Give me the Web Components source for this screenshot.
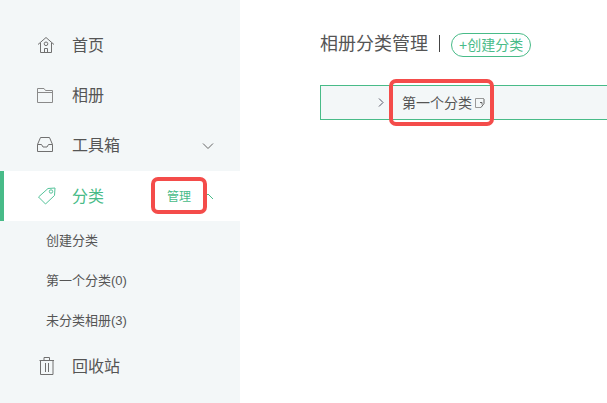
<!DOCTYPE html>
<html lang="zh">
<head>
<meta charset="utf-8">
<title>相册分类管理</title>
<style>
    html, body { margin: 0; height: 100%; overflow: hidden; background: #fff; }
    body { font-family: "Liberation Sans", "Noto Sans CJK SC", sans-serif; color: #555; }
</style>
</head>
<body>
<app-shell>
    <side-bar slot="side">
        <nav-item icon="home" label="首页"></nav-item>
        <nav-item icon="folder" label="相册"></nav-item>
        <nav-item icon="inbox" label="工具箱" arrow="down"></nav-item>
        <nav-item icon="tag" label="分类" arrow="up" active></nav-item>
        <sub-item>创建分类</sub-item>
        <sub-item>第一个分类(0)</sub-item>
        <sub-item>未分类相册(3)</sub-item>
        <nav-item icon="trash" label="回收站"></nav-item>
    </side-bar>
    <category-main slot="main"></category-main>
</app-shell>

<script>
const ICONS = {
    home: '<path d="M2 9.500 10 2.500l8 7M4.500 8v9.500h11V8M8.500 17.500v-4h3v4"/><circle cx="10" cy="8.800" r="1.800"/>',
    folder: '<path stroke="#8a8a8a" d="M1.500 17.500v-14H8l1.500 2h7v12zM2 7.500h14"/>',
    inbox: '<path d="M4.500 2.500h9l3 7v7h-15v-7zM1.500 9.500h4l1.500 2.500h4l1.500-2.500h4"/>',
    tag: '<path d="M2.500 11 12 2.500l7-.5-.5 7.500-9 8.500zM13.300 5.500a1.700 1.700 0 1 0 3.400 0a1.700 1.700 0 1 0-3.400 0z"/>',
    trash: '<path d="M3.500 4.500H18M8 4.500v-3h5.500v3M4.500 4.500v14h12.500v-14M9.500 7v9M12.500 7v9"/>'
};

class AppShell extends HTMLElement {
    connectedCallback() {
        this.attachShadow({ mode: 'open' }).innerHTML = `
            <style>
                :host { display: flex; height: 403px; width: 607px; overflow: hidden; }
                .side { flex: 0 0 240px; }
                .main { flex: 1; min-width: 0; }
            </style>
            <div class="side"><slot name="side"></slot></div>
            <div class="main"><slot name="main"></slot></div>
        `;
    }
}

class SideBar extends HTMLElement {
    connectedCallback() {
        this.attachShadow({ mode: 'open' }).innerHTML = `
            <style>
                :host { display: flex; flex-direction: column; box-sizing: border-box; height: 403px; padding-top: 20px; background: #f3f7f8; }
            </style>
            <slot></slot>
        `;
    }
}

class NavItem extends HTMLElement {
    connectedCallback() {
        const active = this.hasAttribute('active');
        const arrow = this.getAttribute('arrow');
        const chevron = arrow === 'up' ? 'M1 7 6 2l5 5' : 'M1 2.500l5 5 5-5';
        this.attachShadow({ mode: 'open' }).innerHTML = `
            <style>
                :host { display: block; }
                .row { position: relative; display: flex; align-items: center; height: 50px; box-sizing: border-box; padding-left: 36px; font-size: 16px; color: #555; }
                .row.active { margin-top: 1px; background: #fff; color: #48bb88; border-left: 4px solid #48bb88; padding-left: 32px; }
                svg.icon { width: 20px; height: 20px; flex: none; fill: none; stroke: #707070; stroke-width: 1; }
                .active svg.icon { stroke: #55c39a; }
                .label { margin-left: 16px; line-height: 20px; padding-top: 2px; }
                .arrow { margin-left: auto; margin-right: 26px; width: 12px; height: 9px; fill: none; stroke: #666; stroke-width: 1; }
                .active .arrow { stroke: #48bb88; }
                .manage { position: absolute; left: 163px; top: 18px; font-size: 12px; line-height: 16px; }
                .mark { position: absolute; left: 147px; top: 6px; width: 56px; height: 37px; box-sizing: border-box; border: 4px solid #f44c4a; border-radius: 7px; }
            </style>
            <div class="row ${active ? 'active' : ''}">
                <svg class="icon" viewBox="0 0 20 20">${ICONS[this.getAttribute('icon')]}</svg>
                <span class="label">${this.getAttribute('label')}</span>
                ${active ? '<span class="manage">管理</span><span class="mark"></span>' : ''}
                ${arrow ? `<svg class="arrow" viewBox="0 0 12 9"><path d="${chevron}"/></svg>` : ''}
            </div>
        `;
    }
}

class SubItem extends HTMLElement {
    connectedCallback() {
        this.attachShadow({ mode: 'open' }).innerHTML = `
            <style>
                :host { display: flex; align-items: center; box-sizing: border-box; height: 40px; padding: 0 0 4px 46px; font-size: 13px; color: #555; }
            </style>
            <slot></slot>
        `;
    }
}

class CategoryMain extends HTMLElement {
    connectedCallback() {
        this.attachShadow({ mode: 'open' }).innerHTML = `
            <style>
                :host { display: block; padding: 33px 0 0 80px; }
                .head { display: flex; align-items: center; height: 24px; }
                h1 { margin: 0 0 2px; font-size: 18px; font-weight: 400; line-height: 24px; color: #555; }
                .bar { width: 1px; height: 17px; background: #444; margin: 0 11px 3px 11px; }
                .pill { box-sizing: border-box; height: 24px; padding: 0 7px; border: 1px solid #48bb88; border-radius: 12px; font-size: 14px; line-height: 22px; color: #48bb88; }
                .row { position: relative; display: flex; align-items: center; box-sizing: border-box; height: 35px; margin-top: 28px; width: 400px; padding-left: 57px; background: #f3f7f8; border: 1px solid #48bb88; color: #555; font-size: 14px; }
                .chev { width: 6px; height: 9px; fill: none; stroke: #556; stroke-width: 1; }
                .name { margin-left: 18px; line-height: 18px; }
                .edit { width: 10px; height: 10px; margin-left: 3px; fill: none; stroke: #666; stroke-width: 1; }
                .mark { position: absolute; left: 68px; top: -7px; width: 105px; height: 47px; box-sizing: border-box; border: 4px solid #f44c4a; border-radius: 7px; }
            </style>
            <div class="head">
                <h1>相册分类管理</h1>
                <span class="bar"></span>
                <span class="pill">+创建分类</span>
            </div>
            <div class="row">
                <svg class="chev" viewBox="0 0 6 9"><path d="M1 .5l4 4-4 4"/></svg>
                <span class="name">第一个分类</span>
                <svg class="edit" viewBox="0 0 10 10"><path stroke="#999" d="M9 .5H.5v9H6"/><path d="M9 1v4.500L6 9.500M5 4.500h2v2"/></svg>
                <span class="mark"></span>
            </div>
        `;
    }
}

customElements.define('app-shell', AppShell);
customElements.define('side-bar', SideBar);
customElements.define('nav-item', NavItem);
customElements.define('sub-item', SubItem);
customElements.define('category-main', CategoryMain);
</script>
</body>
</html>
